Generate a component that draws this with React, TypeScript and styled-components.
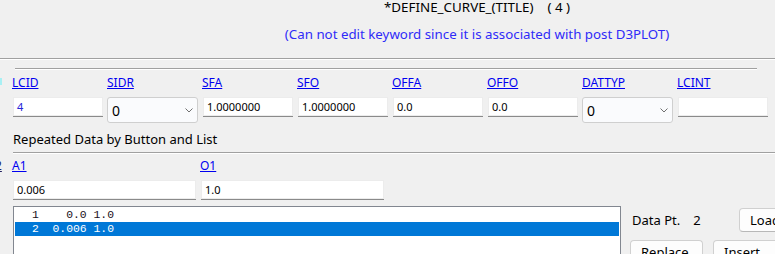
import React from "react";
import styled, { createGlobalStyle } from "styled-components";

const GlobalStyle = createGlobalStyle`
  html, body {
    margin: 0;
    padding: 0;
    background: #f0f0f0;
    overflow: hidden;
  }
  body {
    font-family: "Noto Sans", "Open Sans", sans-serif;
    color: #000;
  }
`;

const Panel = styled.div`
  width: 954px;
  height: 254px;
  position: relative;
  background: #f0f0f0;
`;

const Header = styled.div`
  height: 58px;
  display: flex;
  flex-direction: column;
  align-items: center;
`;

const Title = styled.div`
  margin-top: -1px;
  font-size: 13.4px;
  line-height: 16px;
  white-space: pre;
`;

const Notice = styled.div`
  margin-top: 11px;
  font-size: 13.3px;
  line-height: 16px;
  color: #2f2bf8;
`;

const Etched = styled.div<{ $indent?: number; $width?: string }>`
  height: 0;
  border-top: 1px solid #a0a0a0;
  border-bottom: 1px solid #ffffff;
  margin-left: ${(p) => p.$indent ?? 0}px;
  width: ${(p) => p.$width ?? "auto"};
`;

const FieldRow = styled.div`
  margin-top: 5px;
  padding-left: 12px;
  display: flex;
  gap: 4px;
  position: relative;
`;

const Column = styled.div<{ $width: number }>`
  width: ${(p) => p.$width}px;
  display: flex;
  flex-direction: column;
`;

const FieldLabel = styled.a`
  font-size: 12px;
  line-height: 15px;
  color: #0000f0;
  text-decoration: underline;
  align-self: flex-start;
  cursor: pointer;
`;

const TextBox = styled.div<{ $blue?: boolean }>`
  margin-top: 7px;
  margin-left: 1px;
  height: 19px;
  background: #ffffff;
  border-bottom: 1px solid #8a8a8a;
  box-shadow: inset 0 0 0 1px #ececec;
  font-size: 11px;
  line-height: 19px;
  padding-left: 4px;
  color: ${(p) => (p.$blue ? "#2424d8" : "#000")};
`;

const Select = styled.div`
  margin-top: 7px;
  background: #fafbfd;
  border: 1px solid #cfcfcf;
  border-radius: 3px;
  display: flex;
  align-items: center;
  justify-content: space-between;
  padding: 0 4px 0 4px;
  font-size: 14px;
  box-sizing: border-box;
  height: 26px;
`;

const Chevron = () => (
  <svg width="8" height="5" viewBox="0 0 8 5">
    <path d="M0.5 0.5 L4 4 L7.5 0.5" fill="none" stroke="#707070" strokeWidth="1" />
  </svg>
);

const EdgeMark = styled.div`
  position: absolute;
  left: 0;
  top: 3px;
  width: 2px;
  height: 7px;
  background: #a8f0f4;
`;

const EdgeLabel = styled.span`
  position: absolute;
  left: -5px;
  top: 0;
  font-size: 12px;
  line-height: 15px;
  color: #202060;
  text-decoration: underline;
`;

const SectionTitle = styled.div`
  margin-top: 8px;
  padding-left: 13px;
  font-size: 13px;
  line-height: 17px;
`;

const SectionLine = styled(Etched)`
  margin-top: 4px;
`;

const DataArea = styled.div`
  margin-top: 6px;
  display: flex;
  gap: 9px;
  padding-left: 13px;
`;

const ListBox = styled.div`
  width: 608px;
  height: 60px;
  background: #fff;
  border: 1px solid #828790;
  box-sizing: border-box;
  padding: 1px 1px 0 1px;
  font-family: "Liberation Mono", "Courier New", monospace;
  font-size: 11.4px;
  flex-shrink: 0;
`;

const ListRow = styled.div<{ $selected?: boolean }>`
  height: 14px;
  line-height: 14px;
  padding-left: 17px;
  white-space: pre;
  background: ${(p) => (p.$selected ? "#0078d7" : "transparent")};
  color: ${(p) => (p.$selected ? "#fff" : "#201020")};
`;

const SidePanel = styled.div`
  display: flex;
  flex-direction: column;
  gap: 8px;
  padding-top: 2px;
`;

const SideRow = styled.div`
  display: flex;
  align-items: center;
  gap: 10px;
`;

const Caption = styled.div`
  font-size: 13px;
  white-space: pre;
  width: 97px;
  padding-left: 2px;
`;

const CaptionValue = styled.span`
  margin-left: 13px;
`;

const Button = styled.button<{ $width: number }>`
  width: ${(p) => p.$width}px;
  height: 24px;
  background: #fdfdfd;
  border: 1px solid #d0d0d0;
  border-bottom-color: #b8b8b8;
  border-radius: 4px;
  font-family: "Noto Sans", sans-serif;
  font-size: 13px;
  text-align: left;
  padding: 0 0 0 10px;
  color: #000;
  flex-shrink: 0;
`;

const headerFields = [
  { label: "LCID", kind: "text", value: "4", blue: true },
  { label: "SIDR", kind: "select", value: "0" },
  { label: "SFA", kind: "text", value: "1.0000000" },
  { label: "SFO", kind: "text", value: "1.0000000" },
  { label: "OFFA", kind: "text", value: "0.0" },
  { label: "OFFO", kind: "text", value: "0.0" },
  { label: "DATTYP", kind: "select", value: "0" },
  { label: "LCINT", kind: "text", value: "" },
];

export default function App() {
  return (
    <>
      <GlobalStyle />
      <Panel>
        <Header>
          <Title>{"*DEFINE_CURVE_(TITLE)    ( 4 )"}</Title>
          <Notice>(Can not edit keyword since it is associated with post D3PLOT)</Notice>
        </Header>
        <Etched />
        <Etched $indent={15} $width="742px" style={{ marginTop: 8 }} />
        <FieldRow>
          <EdgeMark />
          {headerFields.map((f) => (
            <Column key={f.label} $width={91}>
              <FieldLabel>{f.label}</FieldLabel>
              {f.kind === "select" ? (
                <Select>
                  <span>{f.value}</span>
                  <Chevron />
                </Select>
              ) : (
                <TextBox $blue={f.blue}>{f.value}</TextBox>
              )}
            </Column>
          ))}
        </FieldRow>
        <SectionTitle>Repeated Data by Button and List</SectionTitle>
        <SectionLine $indent={13} />
        <FieldRow style={{ marginTop: 4 }}>
          <EdgeLabel>2</EdgeLabel>
          <Column $width={184}>
            <FieldLabel>A1</FieldLabel>
            <TextBox>0.006</TextBox>
          </Column>
          <Column $width={184}>
            <FieldLabel>O1</FieldLabel>
            <TextBox>1.0</TextBox>
          </Column>
        </FieldRow>
        <DataArea>
          <ListBox>
            <ListRow>{"1    0.0 1.0"}</ListRow>
            <ListRow $selected>{"2  0.006 1.0"}</ListRow>
          </ListBox>
          <SidePanel>
            <SideRow>
              <Caption>
                Data Pt.<CaptionValue>2</CaptionValue>
              </Caption>
              <Button $width={80}>Load</Button>
            </SideRow>
            <SideRow>
              <Button $width={73}>Replace</Button>
              <Button $width={73}>Insert</Button>
            </SideRow>
          </SidePanel>
        </DataArea>
      </Panel>
    </>
  );
}
